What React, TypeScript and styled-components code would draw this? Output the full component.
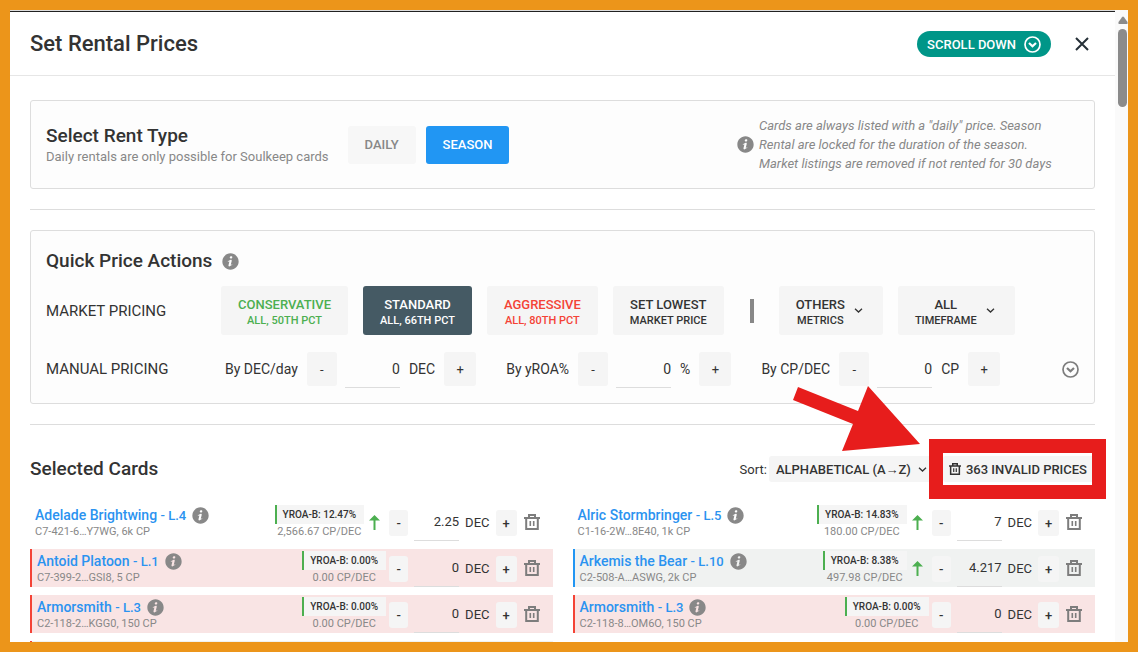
import React, { useState } from 'react';
import styled, { createGlobalStyle, css } from 'styled-components';

const GlobalStyle = createGlobalStyle`
  *, *::before, *::after { box-sizing: border-box; }
  body { margin: 0; font-family: Roboto, "Liberation Sans", sans-serif; font-size: 14px; color: #333; background: #fff; }
  button, input, select { font: inherit; color: inherit; margin: 0; }
  h1, h2, p { margin: 0; }
`;

const Frame = styled.div`
  display: flex;
  height: 100vh;
  border: 10px solid #ec951a;
  overflow: hidden;
`;

const Modal = styled.main`
  flex: 1;
  min-width: 0;
  border-top: 1px solid #ddd;
  overflow: hidden;
`;

const Header = styled.header`
  display: flex;
  align-items: center;
  height: 65px;
  padding: 1px 26px 0 20px;
  border-top: 1px solid #222;
  border-bottom: 1px solid #e6e6e6;
`;

const Title = styled.h1`
  flex: 1;
  font-size: 22px;
  font-weight: 500;
  line-height: 30px;
`;

const ScrollDown = styled.button`
  display: flex;
  align-items: center;
  gap: 8px;
  height: 26px;
  padding: 0 10px;
  border: 0;
  border-radius: 13px;
  background: #009688;
  color: #fff;
  font-size: 13px;
  font-weight: 500;
`;

const IconButton = styled.button`
  display: flex;
  padding: 0;
  border: 0;
  background: none;
  color: #7d7d7d;
`;

const CloseButton = styled(IconButton)`
  margin-left: 24px;
  color: #263038;
`;

const Content = styled.div`
  padding: 24px 20px 0;
`;

const Panel = styled.section`
  border: 1px solid #ddd;
  border-radius: 3px;
  background: #fdfdfd;
  padding: 15px;
`;

const RentPanel = styled(Panel)`
  display: flex;
  align-items: center;
`;

const Divider = styled.hr`
  height: 1px;
  margin: 20px 0;
  border: 0;
  background: #ddd;
`;

const Heading = styled.h2`
  display: flex;
  align-items: center;
  gap: 10px;
  font-size: 19px;
  font-weight: 500;
  line-height: 24px;
`;

const ActionsHeading = styled(Heading)`
  line-height: 30px;
`;

const Hint = styled.p`
  color: #888;
  font-size: 13px;
  line-height: 17px;
`;

const RentTabs = styled.div`
  display: flex;
  gap: 10px;
  margin-left: 19px;
`;

type Tone = 'plain' | 'muted' | 'blue' | 'slate' | 'green' | 'red';

const tones: Record<Tone, ReturnType<typeof css>> = {
  plain: css`background: #f5f5f5; color: #333;`,
  muted: css`background: #f7f7f7; color: #888;`,
  blue: css`background: #2196f3; color: #fff;`,
  slate: css`background: #455a64; color: #fff;`,
  green: css`background: #f5f5f5; color: #4caf50;`,
  red: css`background: #f5f5f5; color: #f44336;`,
};

const Button = styled.button<{ $tone: Tone }>`
  display: flex;
  align-items: center;
  justify-content: center;
  height: 38px;
  padding: 0 17px;
  border: 0;
  border-radius: 3px;
  font-size: 13px;
  font-weight: 500;
  ${(p) => tones[p.$tone]}
`;

const PriceButton = styled(Button)<{ $menu?: boolean }>`
  gap: 9px;
  height: 49px;
  padding-right: ${(p) => (p.$menu ? 20 : 17)}px;
  line-height: 16px;
`;

const Stacked = styled.span`
  display: flex;
  flex-direction: column;
  align-items: center;
  padding-top: 4px;
`;

const SubLabel = styled.span`
  font-size: 11px;
`;

const RentNote = styled.div`
  display: flex;
  align-items: center;
  gap: 5px;
  width: 342px;
  margin-left: auto;
  color: #888;
`;

const NoteText = styled.p`
  font-size: 13px;
  font-style: italic;
  line-height: 19px;
`;

const ActionRow = styled.div`
  display: flex;
  align-items: center;
`;

const MarketRow = styled(ActionRow)`
  gap: 15px;
  margin-top: 10px;
`;

const ManualRow = styled(ActionRow)`
  margin-top: 15px;
`;

const RowLabel = styled.span`
  width: 160px;
  font-size: 15px;
`;

const ManualLabel = styled(RowLabel)`
  width: 179px;
`;

const Bar = styled.span`
  width: 4px;
  height: 24px;
  margin: 0 10px 0 11px;
  background: #888;
`;

const ManualGroup = styled.div`
  display: flex;
  align-items: center;
  margin-right: 30px;
`;

const Step = styled.button<{ $wide?: boolean }>`
  height: ${(p) => (p.$wide ? 34 : 26)}px;
  padding: 0;
  border: 0;
  border-radius: 3px;
  background: #f5f5f5;
  font-size: 13px;
  font-weight: ${(p) => (p.$wide ? 400 : 500)};
`;

const Minus = styled(Step)`
  width: ${(p) => (p.$wide ? 30 : 19)}px;
`;

const Plus = styled(Step)`
  width: ${(p) => (p.$wide ? 32 : 21)}px;
`;

const Amount = styled.input<{ $wide?: boolean }>`
  width: ${(p) => (p.$wide ? 55 : 45)}px;
  height: 38px;
  padding: 0;
  border: 0;
  border-bottom: 1px solid #ddd;
  border-radius: 0;
  background: none;
  outline: none;
  text-align: right;
  font-size: ${(p) => (p.$wide ? 14 : 13)}px;
`;

const GroupLabel = styled.label`
  margin-right: 9px;
`;

const ManualAmount = styled(Amount)`
  margin: 0 9px 0 8px;
`;

const Unit = styled.span`
  margin-right: 9px;
`;

const Expand = styled(IconButton)`
  margin-left: auto;
`;

const CardsHeader = styled.div`
  display: flex;
  align-items: center;
  height: 48px;
`;

const SortLabel = styled.label`
  margin-left: auto;
  font-size: 13px;
`;

const SelectWrap = styled.span`
  display: grid;
  align-items: center;
  margin: 0 10px 0 2px;
  & > * { grid-area: 1 / 1; }
  & > svg { justify-self: end; margin-right: 6px; pointer-events: none; }
`;

const Select = styled.select`
  width: 164px;
  height: 26px;
  padding: 0 0 0 7px;
  border: 0;
  border-radius: 3px;
  background: #f5f5f5;
  appearance: none;
  font-size: 13px;
  font-weight: 500;
`;

const Marked = styled.div`
  position: relative;
`;

const InvalidButton = styled(Button)`
  gap: 4px;
  height: 26px;
  padding: 0 8px 0 5px;
`;

const MarkFrame = styled.span`
  position: absolute;
  inset: -17px -11px -17px -14px;
  border: 14px solid #e71d1c;
  pointer-events: none;
`;

const MarkArrow = styled.svg`
  position: absolute;
  right: 173px;
  bottom: 30px;
  pointer-events: none;
`;

const CardGrid = styled.div`
  display: grid;
  grid-template-columns: 1fr 1fr;
  gap: 8px 20px;
  margin-top: 10px;
`;

type RowTone = 'none' | 'error' | 'active' | 'changed';

const rowTones: Record<RowTone, ReturnType<typeof css>> = {
  none: css``,
  error: css`border-left: 2px solid #f44336; background: #f9e4e4;`,
  active: css`border-left: 2px solid #2196f3; background: #f0f2f1;`,
  changed: css`border-left: 2px solid #f44336; background: #f0f2f1;`,
};

const CardRow = styled.article<{ $tone: RowTone }>`
  display: flex;
  align-items: center;
  height: 38px;
  padding: 0 12px 0 5px;
  ${(p) => rowTones[p.$tone]}
`;

const CardInfo = styled.div`
  flex: 1;
  min-width: 0;
  padding-top: 2px;
  color: #888;
`;

const NameLine = styled.div`
  display: flex;
  align-items: center;
  gap: 6px;
  line-height: 17px;
`;

const NameLink = styled.a`
  color: #2b93f0;
  font-size: 14px;
  font-weight: 500;
  text-decoration: none;
`;

const Level = styled.span`
  font-size: 13px;
`;

const Meta = styled.div`
  color: #888;
  font-size: 11px;
  line-height: 15px;
`;

const Yield = styled.div<{ $up?: boolean }>`
  display: flex;
  flex-direction: column;
  align-items: center;
  margin-right: ${(p) => (p.$up ? 5 : 3)}px;
`;

const Badge = styled.span`
  padding: 0 8px 0 6px;
  border-left: 2px solid #4caf50;
  background: #f5f5f5;
  font-size: 10px;
  font-weight: 500;
  line-height: 19px;
`;

const UpArrow = styled.svg`
  margin-right: 9px;
`;

const RowControls = styled.div`
  display: flex;
  align-items: center;
  gap: 6px;
  font-size: 13px;
  & > ${Minus}, & > ${Plus} { margin-top: 2px; }
`;

const ScrollTrack = styled.div`
  display: flex;
  flex-direction: column;
  align-items: center;
  gap: 5px;
  width: 13px;
  padding: 6px 0 0 2px;
  background: #fafafa;
`;

const ScrollThumb = styled.div`
  width: 9px;
  height: 78px;
  border-radius: 5px;
  background: #8b8b8b;
`;

const InfoIcon = () => (
  <svg width="17" height="17" viewBox="0 0 20 20" fill="#888" aria-hidden="true">
    <path d="M10 .4C4.697.4.399 4.698.399 10c0 5.301 4.298 9.6 9.601 9.6 5.301 0 9.6-4.299 9.6-9.6 0-5.302-4.299-9.6-9.6-9.6zm.896 3.466c.936 0 1.211.543 1.211 1.164 0 .775-.62 1.492-1.679 1.492-.886 0-1.308-.445-1.282-1.182 0-.621.519-1.474 1.75-1.474zM8.498 15.75c-.64 0-1.107-.389-.66-2.094l.733-3.025c.127-.484.148-.678 0-.678-.191 0-1.022.334-1.512.664l-.319-.523c1.555-1.299 3.343-2.061 4.108-2.061.64 0 .746.756.427 1.92l-.84 3.18c-.149.562-.085.756.064.756.192 0 .82-.232 1.438-.719l.362.486c-1.513 1.512-3.162 2.094-3.801 2.094z" />
  </svg>
);

const CircleDown = () => (
  <svg width="17" height="17" viewBox="0 0 17 17" fill="none" stroke="currentColor" aria-hidden="true">
    <circle cx="8.500" cy="8.500" r="7.500" strokeWidth="1.700" />
    <path d="M5 7l3.500 3.300L12 7" strokeWidth="2.200" />
  </svg>
);

const TrashIcon = ({ small }: { small?: boolean }) => (
  <svg
    width={small ? 14 : 18}
    height={small ? 12 : 16}
    viewBox="-1 0 18 16"
    fill="none"
    stroke="currentColor"
    strokeWidth="2"
    aria-hidden="true"
  >
    <path d="M0 4h16M2.200 4v11h11.600V4M5 4V1h6v3" />
    <path d="M6.300 7v5M9.700 7v5" strokeWidth="1.600" />
  </svg>
);

const Chevron = () => (
  <svg width="9" height="9" viewBox="0 0 9 9" fill="none" stroke="#333" strokeWidth="1.300" aria-hidden="true">
    <path d="M1 2.700l3.500 3.300L8 2.700" />
  </svg>
);

type Card = {
  name: string; level: string; code: string; roa: string; cp: string;
  up?: boolean; price: string; tone: RowTone;
};

const cards: Card[] = [
  { name: 'Adelade Brightwing', level: 'L.4', code: 'C7-421-6…Y7WG, 6k CP', roa: '12.47%', cp: '2,566.67', up: true, price: '2.25', tone: 'none' },
  { name: 'Alric Stormbringer', level: 'L.5', code: 'C1-16-2W…8E40, 1k CP', roa: '14.83%', cp: '180.00', up: true, price: '7', tone: 'none' },
  { name: 'Antoid Platoon', level: 'L.1', code: 'C7-399-2…GSI8, 5 CP', roa: '0.00%', cp: '0.00', price: '0', tone: 'error' },
  { name: 'Arkemis the Bear', level: 'L.10', code: 'C2-508-A…ASWG, 2k CP', roa: '8.38%', cp: '497.98', up: true, price: '4.217', tone: 'active' },
  { name: 'Armorsmith', level: 'L.3', code: 'C2-118-2…KGG0, 150 CP', roa: '0.00%', cp: '0.00', price: '0', tone: 'error' },
  { name: 'Armorsmith', level: 'L.3', code: 'C2-118-8…OM6O, 150 CP', roa: '0.00%', cp: '0.00', price: '0', tone: 'error' },
];

const CardItem = ({ card }: { card: Card }) => {
  const [price, setPrice] = useState(card.price);
  return (
    <CardRow $tone={card.tone}>
      <CardInfo>
        <NameLine>
          <NameLink href="#">{card.name} <Level>- {card.level}</Level></NameLink>
          <InfoIcon />
        </NameLine>
        <Meta>{card.code}</Meta>
      </CardInfo>
      <Yield $up={card.up}>
        <Badge>YROA-B: {card.roa}</Badge>
        <Meta>{card.cp} CP/DEC</Meta>
      </Yield>
      {card.up && (
        <UpArrow width="11" height="15" viewBox="0 0 11 15" fill="#4caf50" aria-hidden="true">
          <path d="M5.500 0L11 5.500H6.500V15h-2V5.500H0z" />
        </UpArrow>
      )}
      <RowControls>
        <Minus aria-label="Decrease">-</Minus>
        <Amount aria-label={`${card.name} price`} value={price} onChange={(e) => setPrice(e.target.value)} />
        <span>DEC</span>
        <Plus aria-label="Increase">+</Plus>
        <IconButton aria-label="Remove card"><TrashIcon /></IconButton>
      </RowControls>
    </CardRow>
  );
};

const ManualField = ({ id, label, unit }: { id: string; label: string; unit: string }) => {
  const [value, setValue] = useState('0');
  return (
    <ManualGroup>
      <GroupLabel htmlFor={id}>{label}</GroupLabel>
      <Minus $wide aria-label="Decrease">-</Minus>
      <ManualAmount $wide id={id} value={value} onChange={(e) => setValue(e.target.value)} />
      <Unit>{unit}</Unit>
      <Plus $wide aria-label="Increase">+</Plus>
    </ManualGroup>
  );
};

const Price = ({ tone, top, bottom, menu }: { tone: Tone; top: string; bottom: string; menu?: boolean }) => (
  <PriceButton $tone={tone} $menu={menu} aria-haspopup={menu ? 'menu' : undefined}>
    <Stacked>
      {top}
      <SubLabel>{bottom}</SubLabel>
    </Stacked>
    {menu && <Chevron />}
  </PriceButton>
);

export default function App() {
  return (
    <Frame>
      <GlobalStyle />
      <Modal>
        <Header>
          <Title>Set Rental Prices</Title>
          <ScrollDown>SCROLL DOWN <CircleDown /></ScrollDown>
          <CloseButton aria-label="Close">
            <svg width="14" height="14" viewBox="0 0 14 14" stroke="currentColor" strokeWidth="2" aria-hidden="true">
              <path d="M1 1l12 12M13 1L1 13" />
            </svg>
          </CloseButton>
        </Header>
        <Content>
          <RentPanel>
            <div>
              <Heading>Select Rent Type</Heading>
              <Hint>Daily rentals are only possible for Soulkeep cards</Hint>
            </div>
            <RentTabs>
              <Button $tone="muted">DAILY</Button>
              <Button $tone="blue">SEASON</Button>
            </RentTabs>
            <RentNote>
              <InfoIcon />
              <NoteText>
                Cards are always listed with a "daily" price. Season<br />
                Rental are locked for the duration of the season.<br />
                Market listings are removed if not rented for 30 days
              </NoteText>
            </RentNote>
          </RentPanel>
          <Divider />
          <Panel>
            <ActionsHeading>Quick Price Actions <InfoIcon /></ActionsHeading>
            <MarketRow>
              <RowLabel>MARKET PRICING</RowLabel>
              <Price tone="green" top="CONSERVATIVE" bottom="ALL, 50TH PCT" />
              <Price tone="slate" top="STANDARD" bottom="ALL, 66TH PCT" />
              <Price tone="red" top="AGGRESSIVE" bottom="ALL, 80TH PCT" />
              <Price tone="plain" top="SET LOWEST" bottom="MARKET PRICE" />
              <Bar />
              <Price tone="plain" top="OTHERS" bottom="METRICS" menu />
              <Price tone="plain" top="ALL" bottom="TIMEFRAME" menu />
            </MarketRow>
            <ManualRow>
              <ManualLabel>MANUAL PRICING</ManualLabel>
              <ManualField id="by-dec" label="By DEC/day" unit="DEC" />
              <ManualField id="by-yroa" label="By yROA%" unit="%" />
              <ManualField id="by-cp" label="By CP/DEC" unit="CP" />
              <Expand aria-label="More"><CircleDown /></Expand>
            </ManualRow>
          </Panel>
          <Divider />
          <CardsHeader>
            <Heading>Selected Cards</Heading>
            <SortLabel htmlFor="sort">Sort:</SortLabel>
            <SelectWrap>
              <Select id="sort"><option>ALPHABETICAL (A→Z)</option></Select>
              <Chevron />
            </SelectWrap>
            <Marked>
              <InvalidButton $tone="plain"><TrashIcon small /> 363 INVALID PRICES</InvalidButton>
              <MarkFrame />
              <MarkArrow width="130" height="68" viewBox="0 0 130 68" fill="#e71d1c" aria-hidden="true">
                <path d="M6 3L66 27L76 2L128 60L50 67L61 40L1 16z" />
              </MarkArrow>
            </Marked>
          </CardsHeader>
          <CardGrid>
            {cards.map((card) => <CardItem key={card.code} card={card} />)}
            <CardRow $tone="changed" />
          </CardGrid>
        </Content>
      </Modal>
      <ScrollTrack aria-hidden="true">
        <svg width="10" height="8" viewBox="0 0 10 8" fill="#8b8b8b"><path d="M4 1.200Q5 0 6 1.200L9.500 6Q10 8 9 8H1Q0 8 .5 6z" /></svg>
        <ScrollThumb />
      </ScrollTrack>
    </Frame>
  );
}
